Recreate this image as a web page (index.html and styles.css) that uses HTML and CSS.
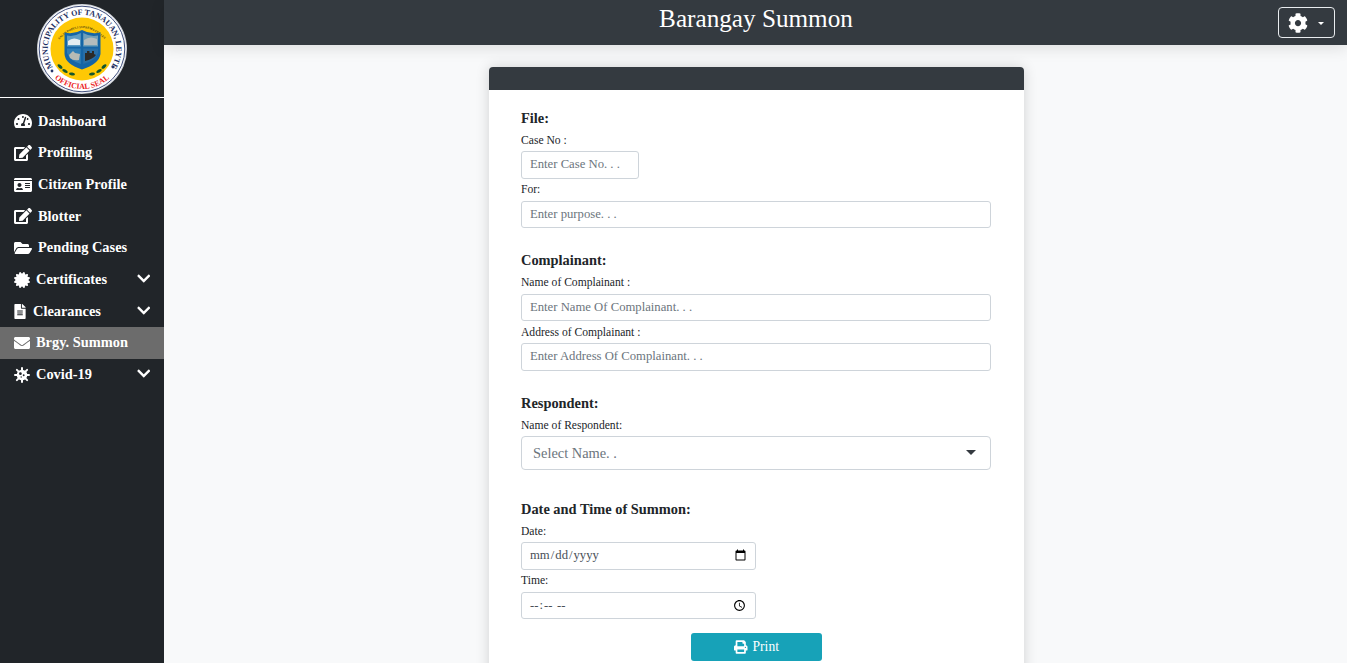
FILE: index.html
```html
<!DOCTYPE html>
<html lang="en">
<head>
<meta charset="utf-8">
<title>Barangay Summon</title>
<link rel="stylesheet" href="styles.css">
</head>
<body>
<div class="app">
  <aside class="sidebar">
    <div class="brand">
      <svg class="seal" viewBox="0 0 90 90" width="90" height="90">
        <defs>
          <path id="arcTop" d="M45 79.300 A34.300 34.300 0 1 1 45.010 79.300"/>
          <path id="arcBottom" d="M7 57.500 A40 40 0 0 0 83 57.500"/>
          <path id="arcMotto" d="M19 39 Q45 9 71 39"/>
        </defs>
        <circle cx="45" cy="45" r="45" fill="#cfd3da"/>
        <circle cx="45" cy="45" r="44" fill="#fff"/>
        <circle cx="45" cy="45" r="42.800" fill="none" stroke="#26386c" stroke-width=".9"/>
        <text class="seal-top"><textPath href="#arcTop" startOffset="50%" text-anchor="middle" textLength="146" lengthAdjust="spacing">MUNICIPALITY OF TANAUAN, LEYTE</textPath></text>
        <text class="seal-bottom"><textPath href="#arcBottom" startOffset="50%" text-anchor="middle">OFFICIAL SEAL</textPath></text>
        <circle cx="15" cy="67" r="1.400" fill="#26386c"/>
        <circle cx="76" cy="63" r="1.400" fill="#26386c"/>
        <circle cx="45" cy="45" r="31.500" fill="#fec805"/>
        <text class="seal-motto"><textPath href="#arcMotto" startOffset="50%" text-anchor="middle">SALUS POPULI SUPREMA EST LEX</textPath></text>
        <path d="M27.500 28.500 Q36 31 45 26 Q54 31 63.500 28.500 V50 Q62 60 45 65.500 Q28 60 27.500 50Z" fill="#1565a6"/>
        <path d="M30 31.500 Q37 33 43.800 29 V42.500 H30Z" fill="#5d9cc4"/>
        <path d="M46.200 29 Q53 33 61 31.500 V42.500 H46.200Z" fill="#6f9fb8"/>
        <path d="M31 37 Q36 32.500 43 36 V41 H31Z" fill="#e4edf1"/>
        <path d="M47 36 Q53 31.500 60 35 V41 H47Z" fill="#b4bcbd"/>
        <path d="M30 44.500 H43.800 V60 Q33 57 30 49Z" fill="#2f7db5"/>
        <path d="M46.200 44.500 H61 V49 Q58 57 46.200 60Z" fill="#2a6fa6"/>
        <path d="M32 51 L36 47 L38 49 L43 50 L42 56 Q36 57 33 54Z" fill="#b7bbb5"/>
        <path d="M48 49 H50 V47 H52.500 V49 H55 V47 H57 V50 L59 51 Q56 55 48 57Z" fill="#2c2b28"/>
        <g fill="#14562c">
          <ellipse cx="23" cy="62.500" rx="3" ry="1.500" transform="rotate(40 23 62.500)"/>
          <ellipse cx="28" cy="67" rx="3" ry="1.500" transform="rotate(30 28 67)"/>
          <ellipse cx="35" cy="70" rx="3" ry="1.500" transform="rotate(10 35 70)"/>
          <ellipse cx="67" cy="62.500" rx="3" ry="1.500" transform="rotate(-40 67 62.500)"/>
          <ellipse cx="62" cy="67" rx="3" ry="1.500" transform="rotate(-30 62 67)"/>
          <ellipse cx="55" cy="70" rx="3" ry="1.500" transform="rotate(-10 55 70)"/>
        </g>
      </svg>
    </div>
    <nav class="menu">
      <a class="menu-item"><svg class="ico" viewBox="0 0 576 512"><path d="M288 32C128.940 32 0 160.940 0 320c0 52.800 14.250 102.260 39.060 144.800 5.610 9.620 16.300 15.200 27.440 15.200h443c11.140 0 21.830-5.580 27.440-15.200C561.750 422.260 576 372.800 576 320c0-159.060-128.940-288-288-288zm0 64c14.710 0 26.580 10.130 30.320 23.650-1.110 2.260-2.640 4.230-3.450 6.670l-9.220 27.670c-5.130 3.490-10.970 6.010-17.640 6.010-17.670 0-32-14.330-32-32S270.330 96 288 96zM96 384c-17.670 0-32-14.330-32-32s14.330-32 32-32 32 14.330 32 32-14.330 32-32 32zm48-160c-17.670 0-32-14.330-32-32s14.330-32 32-32 32 14.330 32 32-14.330 32-32 32zm246.770-72.410l-61.330 184C343.130 347.330 352 364.540 352 384c0 11.720-3.380 22.550-8.880 32H232.880c-5.500-9.450-8.880-20.280-8.880-32 0-33.940 26.500-61.430 59.900-63.590l61.340-184.010c4.170-12.560 17.730-19.450 30.360-15.170 12.570 4.190 19.350 17.790 15.170 30.360zm14.660 57.200l15.520-46.550c3.470-1.290 7.130-2.230 11.050-2.230 17.670 0 32 14.330 32 32s-14.330 32-32 32c-11.380-.01-20.890-6.280-26.570-15.220zM480 384c-17.670 0-32-14.330-32-32s14.330-32 32-32 32 14.330 32 32-14.330 32-32 32z"/></svg><span>Dashboard</span></a>
      <a class="menu-item"><svg class="ico" viewBox="0 0 576 512"><path d="M402.600 83.200l90.200 90.200c3.800 3.800 3.800 10 0 13.800L274.400 405.600l-92.800 10.300c-12.400 1.400-22.900-9.100-21.500-21.500l10.300-92.800L388.800 83.200c3.800-3.800 10-3.800 13.800 0zm162-22.900l-48.800-48.800c-15.200-15.200-39.900-15.200-55.200 0l-35.400 35.400c-3.800 3.800-3.800 10 0 13.800l90.200 90.200c3.800 3.800 10 3.800 13.800 0l35.400-35.400c15.200-15.300 15.200-40 0-55.200zM384 346.200V448H64V128h229.800c3.200 0 6.200-1.300 8.500-3.500l40-40c7.600-7.600 2.200-20.500-8.500-20.500H48C21.500 64 0 85.500 0 112v352c0 26.500 21.500 48 48 48h352c26.500 0 48-21.500 48-48V306.200c0-10.700-12.900-16-20.500-8.500l-40 40c-2.200 2.300-3.500 5.300-3.500 8.500z"/></svg><span>Profiling</span></a>
      <a class="menu-item"><svg class="ico" viewBox="0 0 576 512"><path d="M528 32H48C21.500 32 0 53.500 0 80v16h576V80c0-26.500-21.500-48-48-48zM0 432c0 26.500 21.500 48 48 48h480c26.500 0 48-21.500 48-48V128H0v304zm352-232c0-4.400 3.600-8 8-8h144c4.400 0 8 3.600 8 8v16c0 4.400-3.600 8-8 8H360c-4.400 0-8-3.600-8-8v-16zm0 64c0-4.400 3.600-8 8-8h144c4.400 0 8 3.600 8 8v16c0 4.400-3.600 8-8 8H360c-4.400 0-8-3.600-8-8v-16zm0 64c0-4.400 3.600-8 8-8h144c4.400 0 8 3.600 8 8v16c0 4.400-3.600 8-8 8H360c-4.400 0-8-3.600-8-8v-16zM176 192c35.300 0 64 28.700 64 64s-28.700 64-64 64-64-28.700-64-64 28.700-64 64-64zM67.100 396.200C75.500 370.500 99.600 352 128 352h8.200c12.300 5.100 25.700 8 39.800 8s27.600-2.900 39.800-8h8.200c28.400 0 52.500 18.500 60.900 44.200 3.200 9.900-5.200 19.800-15.600 19.800H82.700c-10.400 0-18.800-10-15.600-19.800z"/></svg><span>Citizen Profile</span></a>
      <a class="menu-item"><svg class="ico" viewBox="0 0 576 512"><path d="M402.600 83.200l90.200 90.200c3.800 3.800 3.800 10 0 13.800L274.400 405.600l-92.800 10.300c-12.400 1.400-22.900-9.100-21.500-21.500l10.300-92.800L388.800 83.200c3.800-3.800 10-3.800 13.800 0zm162-22.900l-48.800-48.800c-15.200-15.200-39.900-15.200-55.200 0l-35.400 35.400c-3.800 3.800-3.800 10 0 13.800l90.200 90.200c3.800 3.800 10 3.800 13.800 0l35.400-35.400c15.200-15.300 15.200-40 0-55.200zM384 346.200V448H64V128h229.800c3.200 0 6.200-1.300 8.500-3.500l40-40c7.600-7.600 2.200-20.500-8.500-20.500H48C21.500 64 0 85.500 0 112v352c0 26.500 21.500 48 48 48h352c26.500 0 48-21.500 48-48V306.200c0-10.700-12.900-16-20.500-8.500l-40 40c-2.200 2.300-3.500 5.300-3.500 8.500z"/></svg><span>Blotter</span></a>
      <a class="menu-item"><svg class="ico" viewBox="0 0 576 512"><path d="M572.694 292.093L500.270 416.248A63.997 63.997 0 0 1 444.989 448H45.025c-18.523 0-30.064-20.093-20.731-36.093l72.424-124.155A64 64 0 0 1 152 256h399.964c18.523 0 30.064 20.093 20.730 36.093zM152 224h328v-48c0-26.510-21.490-48-48-48H272l-64-64H48C21.490 64 0 85.490 0 112v278.046l69.077-118.418C86.214 242.250 117.989 224 152 224z"/></svg><span>Pending Cases</span></a>
      <a class="menu-item"><svg class="ico narrow" viewBox="0 0 512 512"><path d="M458.622 255.920l45.985-45.005c13.708-12.977 7.316-36.039-10.664-40.339l-62.650-15.990 17.661-62.015c4.991-17.838-11.829-34.663-29.661-29.671l-61.994 17.667-15.984-62.671C337.085.197 313.765-6.276 300.990 7.228L256 53.570 211.011 7.229c-12.630-13.351-36.047-7.234-40.325 10.668l-15.984 62.671-61.995-17.667C74.870 57.907 58.056 74.738 63.046 92.572l17.661 62.015-62.650 15.990C.069 174.878-6.310 197.944 7.392 210.915l45.985 45.005-45.985 45.004c-13.708 12.977-7.316 36.039 10.664 40.339l62.650 15.990-17.661 62.015c-4.991 17.838 11.829 34.663 29.661 29.671l61.994-17.667 15.984 62.671c4.439 18.575 27.696 24.018 40.325 10.668L256 458.610l44.989 46.001c12.500 13.488 35.987 7.486 40.325-10.668l15.984-62.671 61.994 17.667c17.833 4.992 34.652-11.833 29.661-29.671l-17.661-62.015 62.650-15.990c17.981-4.300 24.379-27.363 10.664-40.339l-45.984-45.004z"/></svg><span>Certificates</span><svg class="chev" viewBox="0 0 448 512"><path d="M207.029 381.476L12.686 187.132c-9.373-9.373-9.373-24.569 0-33.941l22.667-22.667c9.357-9.357 24.522-9.375 33.901-.04L224 284.505l154.745-154.021c9.379-9.335 24.544-9.317 33.901.04l22.667 22.667c9.373 9.373 9.373 24.569 0 33.941L240.971 381.476c-9.373 9.372-24.569 9.372-33.942 0z"/></svg></a>
      <a class="menu-item"><svg class="ico file" viewBox="0 0 384 512"><path d="M224 136V0H24C10.700 0 0 10.700 0 24v464c0 13.300 10.700 24 24 24h336c13.300 0 24-10.700 24-24V160H248c-13.200 0-24-10.800-24-24zm64 236c0 6.600-5.400 12-12 12H108c-6.600 0-12-5.400-12-12v-8c0-6.600 5.400-12 12-12h168c6.600 0 12 5.400 12 12v8zm0-64c0 6.600-5.400 12-12 12H108c-6.600 0-12-5.400-12-12v-8c0-6.600 5.400-12 12-12h168c6.600 0 12 5.400 12 12v8zm0-72v8c0 6.600-5.400 12-12 12H108c-6.600 0-12-5.400-12-12v-8c0-6.600 5.400-12 12-12h168c6.600 0 12 5.400 12 12zm96-114.100v6.100H256V0h6.100c6.400 0 12.500 2.500 17 7l97.900 98c4.500 4.500 7 10.600 7 16.900z"/></svg><span>Clearances</span><svg class="chev" viewBox="0 0 448 512"><path d="M207.029 381.476L12.686 187.132c-9.373-9.373-9.373-24.569 0-33.941l22.667-22.667c9.357-9.357 24.522-9.375 33.901-.04L224 284.505l154.745-154.021c9.379-9.335 24.544-9.317 33.901.04l22.667 22.667c9.373 9.373 9.373 24.569 0 33.941L240.971 381.476c-9.373 9.372-24.569 9.372-33.942 0z"/></svg></a>
      <a class="menu-item active"><svg class="ico narrow" viewBox="0 0 512 512"><path d="M502.300 190.800c3.900-3.100 9.700-.2 9.700 4.700V400c0 26.500-21.500 48-48 48H48c-26.500 0-48-21.500-48-48V195.600c0-5 5.700-7.800 9.700-4.700 22.400 17.400 52.100 39.500 154.100 113.600 21.100 15.400 56.700 47.800 92.200 47.600 35.700.3 72-32.800 92.300-47.600 102-74.100 131.600-96.300 154-113.700zM256 320c23.200.4 56.600-29.200 73.400-41.400 132.700-96.300 142.800-104.700 173.400-128.700 5.800-4.500 9.200-11.500 9.200-18.900v-19c0-26.500-21.500-48-48-48H48C21.500 64 0 85.500 0 112v19c0 7.400 3.400 14.300 9.200 18.900 30.600 23.900 40.700 32.400 173.400 128.700 16.800 12.200 50.200 41.800 73.400 41.400z"/></svg><span>Brgy. Summon</span></a>
      <a class="menu-item"><svg class="ico narrow" viewBox="0 0 512 512"><path d="M256 32V480M32 256H480M92 92L420 420M420 92L92 420" stroke="#fff" stroke-width="64" stroke-linecap="round"/><circle cx="256" cy="256" r="170"/><circle cx="205" cy="215" r="44" fill="#212529"/><circle cx="310" cy="265" r="30" fill="#212529"/><circle cx="230" cy="320" r="22" fill="#212529"/></svg><span>Covid-19</span><svg class="chev" viewBox="0 0 448 512"><path d="M207.029 381.476L12.686 187.132c-9.373-9.373-9.373-24.569 0-33.941l22.667-22.667c9.357-9.357 24.522-9.375 33.901-.04L224 284.505l154.745-154.021c9.379-9.335 24.544-9.317 33.901.04l22.667 22.667c9.373 9.373 9.373 24.569 0 33.941L240.971 381.476c-9.373 9.372-24.569 9.372-33.942 0z"/></svg></a>
    </nav>
  </aside>
  <div class="main">
    <header class="topbar">
      <h1 class="page-title">Barangay Summon</h1>
      <button class="gear-btn" type="button"><svg class="gear" viewBox="0 0 512 512"><path d="M487.400 315.700l-42.600-24.600c4.300-23.200 4.300-47 0-70.200l42.600-24.600c4.900-2.800 7.100-8.600 5.500-14-11.100-35.600-30-67.800-54.700-94.600-3.800-4.100-10-5.100-14.800-2.300L380.800 110c-17.900-15.400-38.500-27.300-60.800-35.100V25.800c0-5.600-3.900-10.500-9.400-11.700-36.700-8.200-74.300-7.800-109.200 0-5.500 1.200-9.400 6.100-9.400 11.700V75c-22.200 7.900-42.800 19.800-60.800 35.100L88.700 85.500c-4.900-2.800-11-1.900-14.800 2.300-24.700 26.700-43.600 58.900-54.700 94.600-1.700 5.400.6 11.200 5.500 14L67.300 221c-4.300 23.200-4.300 47 0 70.200l-42.600 24.600c-4.900 2.800-7.100 8.600-5.500 14 11.100 35.600 30 67.800 54.700 94.600 3.800 4.100 10 5.100 14.800 2.300l42.600-24.600c17.900 15.400 38.500 27.300 60.800 35.100v49.200c0 5.600 3.900 10.500 9.400 11.700 36.700 8.200 74.300 7.800 109.200 0 5.500-1.200 9.400-6.100 9.400-11.700v-49.200c22.200-7.900 42.800-19.800 60.800-35.100l42.600 24.600c4.900 2.800 11 1.900 14.800-2.300 24.700-26.700 43.600-58.900 54.700-94.600 1.500-5.500-.7-11.300-5.600-14.100zM256 336c-44.100 0-80-35.900-80-80s35.900-80 80-80 80 35.900 80 80-35.900 80-80 80z"/></svg><span class="caret"></span></button>
    </header>
    <main class="content">
      <section class="card">
        <div class="card-head"></div>
        <form class="card-body">
          <h2 class="group-title first">File:</h2>
          <label class="field-label">Case No :</label>
          <input class="control short" type="text" placeholder="Enter Case No. . .">
          <label class="field-label">For:</label>
          <input class="control" type="text" placeholder="Enter purpose. . .">

          <h2 class="group-title">Complainant:</h2>
          <label class="field-label">Name of Complainant :</label>
          <input class="control" type="text" placeholder="Enter Name Of Complainant. . .">
          <label class="field-label">Address of Complainant :</label>
          <input class="control" type="text" placeholder="Enter Address Of Complainant. . .">

          <h2 class="group-title">Respondent:</h2>
          <label class="field-label">Name of Respondent:</label>
          <div class="select-wrap">
            <select class="select-box"><option>Select Name. .</option></select>
            <span class="select-caret"></span>
          </div>

          <h2 class="group-title wide">Date and Time of Summon:</h2>
          <label class="field-label">Date:</label>
          <input class="control medium" type="date">
          <label class="field-label">Time:</label>
          <input class="control medium" type="time">

          <div class="actions">
            <button class="print-btn" type="button"><svg class="print-ico" viewBox="0 0 512 512"><path d="M448 192V77.250c0-8.490-3.370-16.620-9.370-22.630L393.370 9.370c-6-6-14.140-9.370-22.630-9.370H96C78.330 0 64 14.330 64 32v160c-35.350 0-64 28.650-64 64v112c0 8.840 7.160 16 16 16h48v96c0 17.670 14.330 32 32 32h320c17.670 0 32-14.330 32-32v-96h48c8.840 0 16-7.160 16-16V256c0-35.350-28.650-64-64-64zm-64 256H128v-96h256v96zm0-224H128V64h192v48c0 8.840 7.160 16 16 16h48v96zm48 72c-13.250 0-24-10.750-24-24 0-13.260 10.750-24 24-24s24 10.740 24 24c0 13.250-10.750 24-24 24z"/></svg>Print</button>
          </div>
        </form>
      </section>
    </main>
  </div>
</div>
</body>
</html>
```
FILE: styles.css
```css
* { box-sizing: border-box; }
html, body { height: 100%; margin: 0; overflow: hidden; }
body { font-family: "Liberation Serif", "Times New Roman", serif; color: #212529; background: #f8f9fa; }
.app { display: flex; height: 100%; }

.sidebar { flex: 0 0 164px; background: #212529; color: #fff; }
.brand { height: 98px; display: flex; justify-content: center; padding-top: 4px; border-bottom: 1px solid #fff; }
.seal { display: block; }
.seal-top { font: bold 8px "Liberation Serif", serif; fill: #1d2f63; }
.seal-bottom { font: bold 7.800px "Liberation Serif", serif; fill: #ec1c24; }
.seal-motto { font: bold 3.100px "Liberation Serif", serif; fill: #4a3d10; }

.menu { display: flex; flex-direction: column; padding-top: 7.500px; }
.menu-item { display: flex; align-items: center; height: 31.670px; padding: 0 14px; color: #fff; font-size: 14.400px; font-weight: bold; }
.menu-item.active { background: #6c6c6c; }
.ico { width: 18px; height: 16px; fill: #fff; margin-right: 6px; flex: none; }
.ico.narrow { width: 16px; }
.ico.file { width: 12px; height: 15px; margin-right: 7px; }
.chev { width: 13.500px; height: 15px; fill: #fff; margin-left: auto; margin-bottom: 2px; flex: none; }

.main { flex: 1; display: flex; flex-direction: column; min-width: 0; }
.topbar { position: relative; flex: 0 0 45px; background: #343a40; display: flex; justify-content: center; box-shadow: 0 4px 14px rgba(0,0,0,.1); }
.page-title { margin: 0 0 0 1px; color: #fff; font-size: 25.200px; font-weight: normal; line-height: 38px; }
.gear-btn { position: absolute; top: 7px; right: 12px; width: 57px; height: 31px; display: flex; align-items: center; padding: 0 0 0 9px; background: transparent; border: 1px solid #e9ecef; border-radius: 4px; }
.gear { width: 20px; height: 20px; fill: #fff; }
.caret { width: 0; height: 0; margin-left: 10px; margin-top: 2px; border: 3.500px solid transparent; border-top-color: #fff; border-bottom: 0; }

.content { flex: 1; display: flex; justify-content: center; padding: 22px 0 0 2px; overflow: hidden; }
.card { flex: 0 0 535px; height: 700px; background: #fff; border-radius: 4px; box-shadow: 0 0 14px rgba(0,0,0,.16); overflow: hidden; align-self: flex-start; }
.card-head { height: 23px; background: #343a40; }
.card-body { padding: 20px 33px 0 32px; display: flex; flex-direction: column; align-items: stretch; }

.group-title { margin: 24px 0 3.500px; font-size: 14.400px; font-weight: bold; line-height: 16px; }
.group-title.first { margin-top: 0; margin-bottom: 3px; }
.group-title.wide { margin-top: 30.500px; }
.field-label { display: block; font-size: 11.600px; line-height: 18px; margin: 2.500px 0 1.500px; }
.control { display: block; width: 470px; height: 27.500px; padding: 0 8px; font: 12.700px "Liberation Serif", serif; color: #495057; background: #fff; border: 1px solid #ced4da; border-radius: 3px; outline: 0; }
.control::placeholder { color: #6c757d; opacity: 1; }
.control::-webkit-calendar-picker-indicator { margin-right: -2px; }
.control::-webkit-datetime-edit { margin-left: -1px; }
.control.short { width: 118px; }
.control.medium { width: 235px; }

.select-wrap { position: relative; width: 470px; height: 34px; }
.select-box { width: 100%; height: 34px; padding: 0 11px; font: 14.400px "Liberation Serif", serif; color: #6c757d; background: #fff; border: 1px solid #ced4da; border-radius: 4px; appearance: none; outline: 0; }
.select-caret { position: absolute; top: 14px; right: 15px; width: 0; height: 0; border: 5px solid transparent; border-top-color: #343a40; border-bottom: 0; }

.actions { display: flex; justify-content: center; margin-top: 14px; }
.print-btn { width: 131px; height: 28px; display: flex; align-items: center; justify-content: center; color: #fff; background: #17a2b8; border: 0; border-radius: 3px; font: 13.600px "Liberation Serif", serif; padding: 0 0 0 1px; }
.print-ico { width: 13.500px; height: 14px; fill: #fff; margin-right: 5px; }
```
